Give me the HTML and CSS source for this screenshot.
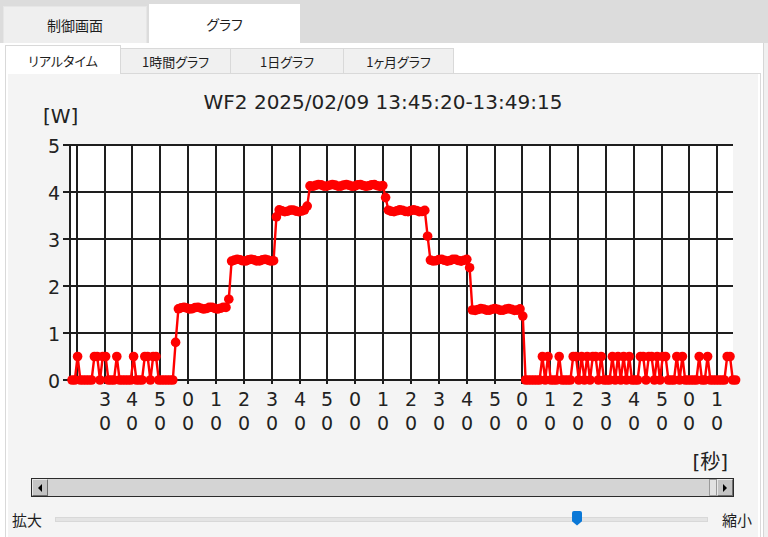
FILE: index.html
```html
<!DOCTYPE html>
<html>

<head>
  <meta charset="UTF-8">
  <title>グラフ</title>
  <link rel="stylesheet" href="styles.css">
</head>

<body>
  <div class="tabbar">
    <div class="tab">制御画面</div>
    <div class="tab active">グラフ</div>
  </div>
  <div class="main">
    <div class="page">
      <div class="subtabs">
        <div class="subtab active">リアルタイム</div>
        <div class="subtab w110">1時間グラフ</div>
        <div class="subtab w113">1日グラフ</div>
        <div class="subtab w110">1ヶ月グラフ</div>
      </div>
      <div class="panel">
        <div class="panel-body">
          <div class="title">WF2 2025/02/09 13:45:20-13:49:15</div>
          <svg id="chart" class="chart" width="750" height="362" viewBox="8 114 750 362"></svg>
          <div class="hscroll">
            <div class="sb-btn"><span class="arrow-left"></span></div>
            <div class="sb-track"></div>
            <div class="sb-thumb"></div>
            <div class="sb-btn"><span class="arrow-right"></span></div>
          </div>
          <div class="zoom">
            <span class="zoom-label">拡大</span>
            <div class="track">
              <div class="thumb"></div>
            </div>
            <span class="zoom-label">縮小</span>
          </div>
        </div>
      </div>
    </div>
    <div class="edge"></div>
  </div>

  <script src="chart.js"></script>
</body>

</html>
```

FILE: styles.css
```css
body {
  margin: 0;
  background-color: #dcdcdc;
  font-family: "Noto Sans CJK JP", sans-serif;
  color: #1e1e1e;
  overflow: hidden;
}

/* top tabs */
.tabbar {
  display: flex;
  align-items: flex-end;
  gap: 2px;
  height: 43px;
  padding-left: 3px;
}

.tab {
  box-sizing: border-box;
  width: 144px;
  height: 37px;
  display: flex;
  align-items: center;
  justify-content: center;
  background-color: #efefef;
  border: 1px solid #e6e6e6;
  border-bottom: none;
  font-size: 14px;
  font-feature-settings: "palt";
}

.tab.active {
  width: 151px;
  height: 39px;
  background-color: white;
  border-color: white;
}

.main {
  display: flex;
  height: 494px;
}

.page {
  width: 763px;
  background-color: white;
}

.edge {
  flex: 1;
  background-color: #f0f0f0;
  border-left: 1px solid #d6d6d6;
}

/* sub tabs */
.subtabs {
  display: flex;
  align-items: flex-end;
  height: 30px;
  padding-left: 5px;
}

.subtab {
  box-sizing: border-box;
  height: 25px;
  display: flex;
  align-items: center;
  justify-content: center;
  background-color: #f0f0f0;
  border: 1px solid #d9d9d9;
  border-left: none;
  border-bottom: none;
  font-size: 13px;
  font-feature-settings: "palt";
}

.subtab.active {
  position: relative;
  width: 116px;
  height: 29px;
  margin-bottom: -1px;
  background-color: white;
  border-left: 1px solid #d9d9d9;
}

.w110 {
  width: 110px;
}

.w113 {
  width: 113px;
}

/* panel */
.panel {
  box-sizing: border-box;
  width: 756px;
  height: 464px;
  margin-left: 5px;
  padding: 0 2px;
  border: 1px solid #d9d9d9;
  border-bottom: none;
  background-color: white;
}

.panel-body {
  height: 100%;
  background-color: #f4f4f4;
}

.title {
  padding-top: 16px;
  font-family: "DejaVu Sans", sans-serif;
  font-size: 20px;
  line-height: 24px;
  text-align: center;
  color: #222;
}

.chart {
  display: block;
  overflow: visible;
}

.grid {
  stroke: #1e1e1e;
  stroke-width: 2;
}

.ylabel,
.xlabel {
  font-family: "DejaVu Sans", sans-serif;
  font-size: 19px;
  fill: #222;
}

.ylabel {
  text-anchor: end;
}

.xlabel {
  text-anchor: middle;
}

.unit {
  font-family: "DejaVu Sans", "Noto Sans CJK JP", sans-serif;
  font-size: 20px;
  fill: #222;
}

.series {
  fill: none;
  stroke: #ff0000;
  stroke-width: 2.4;
  stroke-linejoin: round;
}

.dot {
  fill: #ff0000;
}

/* horizontal scrollbar */
.hscroll {
  box-sizing: border-box;
  display: flex;
  width: 703px;
  height: 19px;
  margin: 2px 0 0 23px;
  border: 1px solid #2b2b2b;
  background-color: #d4d4d4;
}

.sb-btn {
  box-sizing: border-box;
  width: 16px;
  display: flex;
  align-items: center;
  justify-content: center;
  background-color: #c4c4c4;
  border: 1px solid #6e6e6e;
  border-top-color: #e8e8e8;
  border-left-color: #e8e8e8;
}

.sb-track {
  flex: 1;
}

.sb-thumb {
  box-sizing: border-box;
  width: 8px;
  background-color: #e2e2e2;
  border: 1px solid #9a9a9a;
}

.arrow-left {
  border-top: 4px solid transparent;
  border-bottom: 4px solid transparent;
  border-right: 4px solid black;
}

.arrow-right {
  border-top: 4px solid transparent;
  border-bottom: 4px solid transparent;
  border-left: 4px solid black;
}

/* zoom slider */
.zoom {
  display: flex;
  align-items: center;
  height: 22px;
  margin-top: 11px;
  padding-left: 4px;
}

.zoom-label {
  font-size: 15px;
  font-feature-settings: "palt";
}

.track {
  position: relative;
  box-sizing: border-box;
  width: 653px;
  height: 5px;
  margin: 0 14px 0 13px;
  background-color: #e4e4e4;
  border: 1px solid #d8d8d8;
}

.thumb {
  position: absolute;
  left: 516px;
  top: -7px;
  width: 10px;
  height: 15px;
  background-color: #0a78d7;
  clip-path: polygon(0 0, 100% 0, 100% 72%, 50% 100%, 0 72%);
  border-radius: 2px 2px 0 0;
}
```

FILE: chart.js
```js
var NS = "http://www.w3.org/2000/svg";
var chart = document.getElementById("chart");

function add(name, attrs, text) {
  var node = document.createElementNS(NS, name);
  for (var k in attrs) {
    node.setAttribute(k, attrs[k]);
  }
  if (text !== undefined) {
    node.textContent = text;
  }
  chart.appendChild(node);
  return node;
}

var plotLeft = 70;
var plotRight = 733;
var plotTop = 145;
var plotBottom = 380;
var unit = 47;

// plot area
add("rect", {
  x: plotLeft, y: plotTop,
  width: plotRight - plotLeft, height: plotBottom - plotTop,
  fill: "#fff"
});

for (var v = 0; v <= 5; v++) {
  var y = plotBottom - v * unit;
  add("line", { x1: 63, y1: y, x2: plotRight, y2: y, "class": "grid" });
  add("text", { x: 60, y: y + 8, "class": "ylabel" }, v);
}
add("line", { x1: plotLeft, y1: plotTop, x2: plotLeft, y2: plotBottom, "class": "grid" });

// one line every 10 seconds
for (var k = 0; k < 24; k++) {
  var x = Math.round(76.75 + k * 27.85);
  add("line", { x1: x, y1: plotTop, x2: x, y2: plotBottom + 4, "class": "grid" });
  if (k > 0) {
    add("text", { x: x, y: 406, "class": "xlabel" }, (k + 2) % 6);
    add("text", { x: x, y: 430, "class": "xlabel" }, 0);
  }
}

add("text", { x: 43, y: 123, "class": "unit" }, "[W]");
add("text", { x: 728, y: 469, "class": "unit", "text-anchor": "end" }, "[秒]");

// samples, 1 per second
var vals = [];
for (var i = 0; i < 238; i++) {
  vals.push(0);
}

function level(a, b, val) {
  for (var i = a; i <= b; i++) {
    vals[i] = val + 0.02 * Math.sin(i * 1.3);
  }
}

var spikes = [2, 8, 9, 11, 12, 16, 22, 26, 27, 29, 30,
  168, 170, 174, 179, 180, 182, 184, 186, 187, 189, 193, 195, 197, 199,
  203, 204, 206, 207, 209, 211, 212, 216, 218, 224, 227, 234, 235];
spikes.forEach(function (i) {
  vals[i] = 0.5;
});

vals[37] = 0.8;
level(38, 55, 1.53);
vals[56] = 1.72;
level(57, 72, 2.55);
vals[73] = 3.47;
level(74, 83, 3.6);
vals[84] = 3.7;
level(85, 111, 4.14);
vals[112] = 3.88;
level(113, 126, 3.6);
vals[127] = 3.06;
level(128, 141, 2.55);
vals[142] = 2.39;
level(143, 160, 1.5);
vals[161] = 1.36;

var pts = vals.map(function (val, i) {
  return [(72 + i * 2.8).toFixed(1), (plotBottom - val * unit).toFixed(1)];
});

add("polyline", {
  points: pts.map(function (p) { return p.join(","); }).join(" "),
  "class": "series"
});

pts.forEach(function (p) {
  add("circle", { cx: p[0], cy: p[1], r: 4.8, "class": "dot" });
});
```
